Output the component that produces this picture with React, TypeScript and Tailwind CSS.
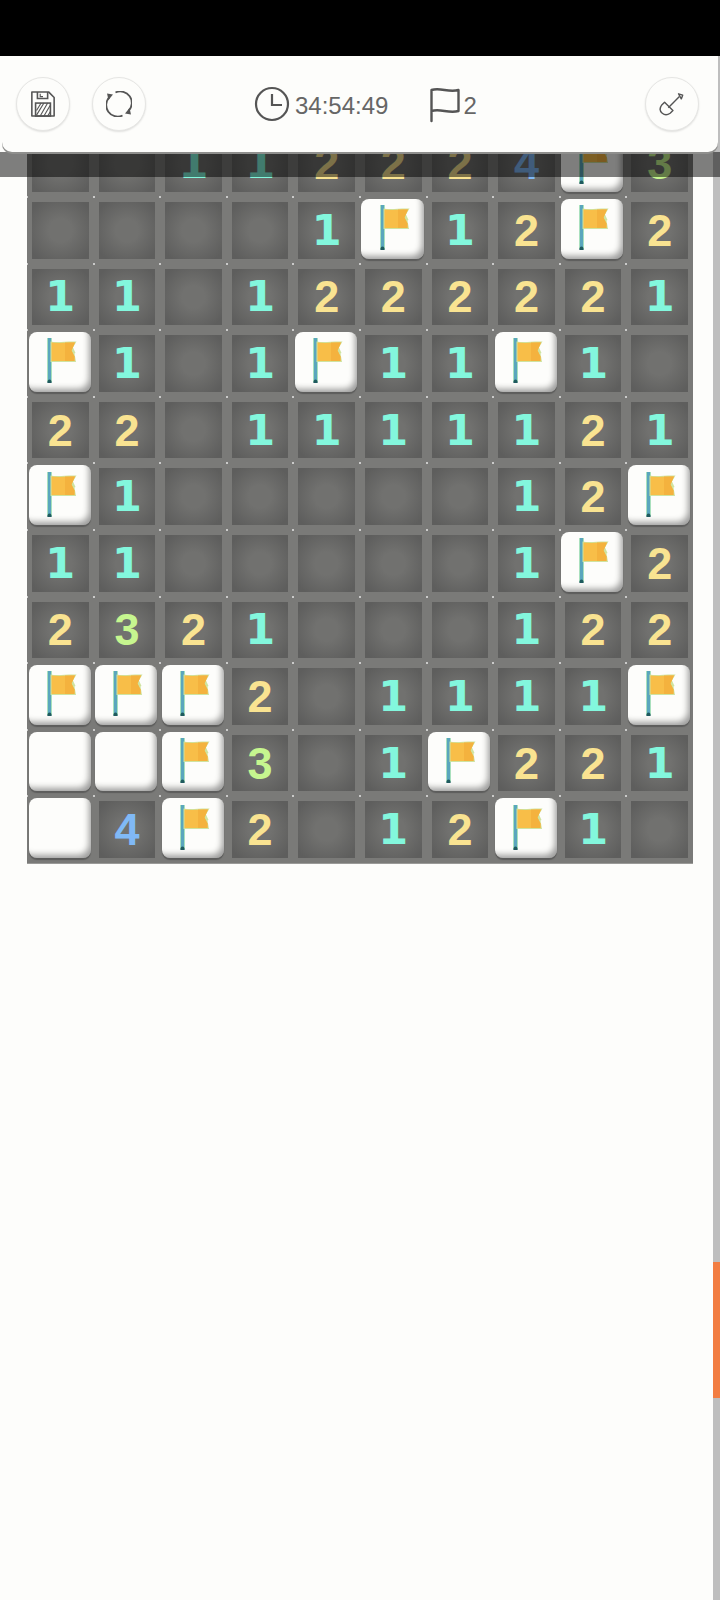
import { clsx } from "clsx";

type Tile = "" | "F" | "U" | 1 | 2 | 3 | 4;

const BOARD: Tile[][] = [
  ["", "", 1, 1, 2, 2, 2, 4, "F", 3],
  ["", "", "", "", 1, "F", 1, 2, "F", 2],
  [1, 1, "", 1, 2, 2, 2, 2, 2, 1],
  ["F", 1, "", 1, "F", 1, 1, "F", 1, ""],
  [2, 2, "", 1, 1, 1, 1, 1, 2, 1],
  ["F", 1, "", "", "", "", "", 1, 2, "F"],
  [1, 1, "", "", "", "", "", 1, "F", 2],
  [2, 3, 2, 1, "", "", "", 1, 2, 2],
  ["F", "F", "F", 2, "", 1, 1, 1, 1, "F"],
  ["U", "U", "F", 3, "", 1, "F", 2, 2, 1],
  ["U", 4, "F", 2, "", 1, 2, "F", 1, ""],
];

const NUMBER_STYLES: Record<number, string> = {
  1: "text-[#83f7dd] text-[43px] font-['DejaVu_Sans',sans-serif]",
  2: "text-[#f9e391] text-[45px] font-['Liberation_Sans',sans-serif]",
  3: "text-[#c6f68f] text-[45px] font-['Liberation_Sans',sans-serif]",
  4: "text-[#80b9f6] text-[45px] font-['Liberation_Sans',sans-serif]",
};

function FlagIcon() {
  return (
    <svg className="ml-[5px] blur-[0.4px]" width="31" height="47" viewBox="0 0 31 47" aria-hidden="true">
      <rect x="0" y="0" width="5" height="44" fill="#a9e0bd" />
      <rect x="1" y="0" width="3" height="44" fill="#5aa6bd" />
      <path d="M3.500 3.500c8 1.500 16-0.500 26 0l-3.500 6 2.500 5.500-1 0.500 1.500 8.500-25.500 0z" fill="#cfe3a0" />
      <path d="M4.500 4.500c8 1 15 0 23.500 0l-3.500 8 3 6v4.500h-23z" fill="#f8be48" />
      <path d="M18 4.500h10l-3.500 8 3 6v4.500h-9.500z" fill="#f4b23e" />
      <path d="M0.300 45c0-2.500 1-3.500 2.200-3.500s2.200 1 2.200 3.500z" fill="#1f5a5e" />
    </svg>
  );
}

function SaveIcon() {
  return (
    <svg width="26" height="28" viewBox="0 0 28 30" fill="none" stroke="#555" strokeWidth="1.7" aria-hidden="true">
      <path d="M2 2h18l6 6v20H2z" strokeLinejoin="round" />
      <path d="M8 2v7h11V2" />
      <path d="M11 4v3h3" strokeWidth="1.2" />
      <rect x="6" y="14" width="16" height="14" />
      <path d="M7 22l5-8M7 27l8-13M11 28l8-14M15 28l7-12M19 28l3-5" strokeWidth="1.2" />
    </svg>
  );
}

function RefreshIcon() {
  return (
    <svg width="26" height="26" viewBox="0 0 26 26" fill="none" stroke="#555" strokeWidth="1.8" aria-hidden="true">
      <path d="M16.500 24.500A11.500 11.500 0 0 1 3.500 6" />
      <path d="M9.500 1.500A11.500 11.500 0 0 1 22.500 20" />
      <path d="M1 2.500L7 3.500L2.500 9z" fill="#555" stroke="none" />
      <path d="M25 23.500L19 22.500L23.500 17z" fill="#555" stroke="none" />
    </svg>
  );
}

function ClockIcon() {
  return (
    <svg width="36" height="36" viewBox="0 0 36 36" fill="none" stroke="#555" strokeWidth="2.2" aria-hidden="true">
      <circle cx="18" cy="18" r="16" />
      <path d="M18 8v11h10" />
    </svg>
  );
}

function OutlineFlagIcon() {
  return (
    <svg width="32" height="36" viewBox="0 0 32 36" fill="none" stroke="#555" strokeWidth="2.4" strokeLinecap="round" strokeLinejoin="round" aria-hidden="true">
      <path d="M2.500 34V3c9-3 17 3 27 0v21c-10 3-18-3-27 0" />
    </svg>
  );
}

function ShovelIcon() {
  return (
    <svg width="26" height="26" viewBox="0 0 28 28" fill="none" stroke="#555" strokeWidth="1.5" strokeLinejoin="round" aria-hidden="true">
      <path d="M10 18L22 6" />
      <path d="M21 3l4.500 1.500L24 8.500z" />
      <path d="M6 12l9 9-3 3c-3 2-6 2-8.500 0S0.500 18.500 3 15z" />
    </svg>
  );
}

function RoundButton({ children }: { children: React.ReactNode }) {
  return (
    <button className="flex h-[54px] w-[54px] items-center justify-center rounded-full border border-[#e6e6e4] bg-[#fdfdfb] shadow-[0_1px_2px_rgba(0,0,0,0.12)]">
      {children}
    </button>
  );
}

function Cell({ tile }: { tile: Tile }) {
  const raised = tile === "F" || tile === "U";
  return (
    <div className="relative h-[66.6px] bg-[#7a7a78]">
      <span className="absolute -left-px -top-px z-[1] h-[2px] w-[2px] rounded-full bg-white/80" />
      {raised ? (
        <div className="absolute top-[2px] right-[3px] bottom-[5px] left-[1.5px] flex items-center justify-center rounded-[8px] bg-[#fdfdfb] shadow-[inset_-5px_-6px_6px_-3px_rgba(0,0,0,0.38),0_2px_1px_rgba(70,70,70,0.55)]">
          {tile === "F" && <FlagIcon />}
        </div>
      ) : (
        <div className="h-full w-full p-[5px]">
          <div
            className={clsx(
              "flex h-full w-full items-center justify-center bg-[radial-gradient(circle_closest-side,#71716f_40%,#5e5e5d_125%)] leading-none font-bold",
              typeof tile === "number" && NUMBER_STYLES[tile],
            )}
          >
            {tile}
          </div>
        </div>
      )}
    </div>
  );
}

export default function App() {
  return (
    <div className="relative flex h-[1600px] w-[720px] flex-col overflow-hidden bg-[#fdfdfb] font-['Liberation_Sans',sans-serif]">
      <div className="h-[56px] bg-black" />
      <div className="flex flex-1">
        <main className="min-w-0 flex-1">
          {/* Toolbar sits over the scrolled board */}
          <header className="relative z-10 mr-[-5px] ml-[2px] flex h-[96px] items-center justify-between rounded-b-[10px] bg-[#fdfdfb] pr-[19px] pl-[14px] shadow-[0_2px_0_#8f8f8d]">
            <div className="flex items-center gap-[22px]">
              <RoundButton>
                <SaveIcon />
              </RoundButton>
              <RoundButton>
                <RefreshIcon />
              </RoundButton>
            </div>
            <div className="absolute left-[252px] flex items-center text-[24px] leading-none text-[#666]">
              <ClockIcon />
              <span className="mt-[3px] ml-[5px]">34:54:49</span>
              <span className="mt-[2px] ml-[41px]">
                <OutlineFlagIcon />
              </span>
              <span className="mt-[3px] ml-[2px]">2</span>
            </div>
            <RoundButton>
              <ShovelIcon />
            </RoundButton>
          </header>
          <div className="mt-[-21.6px] ml-[27px] grid w-[666px] grid-cols-10 shadow-[0_1px_0_#9a9a98]">
            {BOARD.flatMap((row, r) =>
              row.map((tile, c) => <Cell key={`${r}-${c}`} tile={tile} />),
            )}
          </div>
        </main>
        <aside className="w-[7px] bg-[#bebebe] pt-[1206px]">
          <div className="h-[136px] bg-[#f27d42]" />
        </aside>
      </div>
      {/* Dim strip below the toolbar */}
      <div className="absolute inset-x-0 top-[152px] z-[5] h-[25px] bg-black/50" />
    </div>
  );
}
